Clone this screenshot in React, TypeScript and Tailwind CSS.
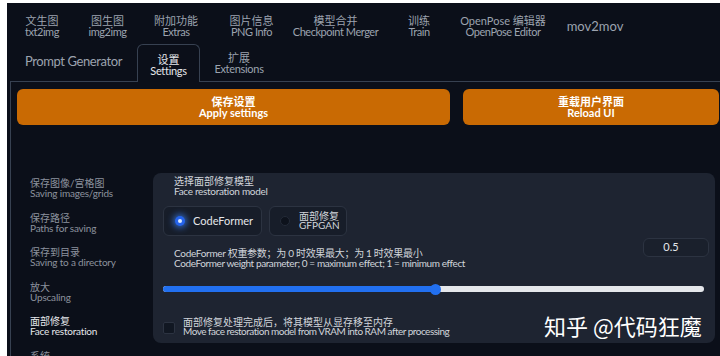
import React from "react";

const FONT = { fontFamily: 'Lato, "Noto Sans CJK SC", sans-serif' };

const row1 = [
  { zh: "文生图", en: "txt2img", w: 64 },
  { zh: "图生图", en: "img2img", w: 67 },
  { zh: "附加功能", en: "Extras", w: 70 },
  { zh: "图片信息", en: "PNG Info", w: 81 },
  { zh: "模型合并", en: "Checkpoint Merger", w: 87 },
  { zh: "训练", en: "Train", w: 80 },
  { zh: "OpenPose 编辑器", en: "OpenPose Editor", w: 88 },
];

const side = [
  { zh: "保存图像/宫格图", en: "Saving images/grids" },
  { zh: "保存路径", en: "Paths for saving" },
  { zh: "保存到目录", en: "Saving to a directory" },
  { zh: "放大", en: "Upscaling" },
  { zh: "面部修复", en: "Face restoration", active: true },
  { zh: "系统", en: "System" },
];

export default function App() {
  return (
    <div className="relative w-[720px] h-[356px] overflow-hidden bg-white pt-[3px] pl-[7px]" style={FONT}>
      <div className="h-[353px] w-[713px] bg-[#0b0f19] pl-[3px] flex flex-col overflow-hidden">
        {/* Row 1 tabs */}
        <div className="mt-[5px] h-[36px] flex items-center text-[#9ca3af] flex-none">
          {row1.map((t) => (
            <div key={t.en} className="flex-none flex flex-col items-center whitespace-nowrap text-[11px] leading-[11px]" style={{ width: t.w }}>
              <span>{t.zh}</span>
              <span className="tracking-[-0.45px]">{t.en}</span>
            </div>
          ))}
          <div className="flex-none w-[96px] text-center text-[13px] leading-[14px]">mov2mov</div>
        </div>
        {/* Row 2 tabs */}
        <div className="h-[38px] flex flex-none text-[#9ca3af]">
          <div className="w-[127px] flex-none border-b border-[#374151] flex items-center justify-center text-[13px] tracking-[-0.4px] pb-[1px]">
            Prompt Generator
          </div>
          <div className="w-[63px] flex-none border-t border-l border-r border-[#374151] rounded-t-[6px] flex flex-col items-center justify-center text-[11px] leading-[11px] text-[#e5e7eb] pt-[2px]">
            <span>设置</span>
            <span className="tracking-[-0.3px]">Settings</span>
          </div>
          <div className="flex-1 border-b border-[#374151] flex">
            <div className="w-[78px] flex flex-col items-center justify-center text-[11px] leading-[11px] pt-[1px]">
              <span>扩展</span>
              <span className="tracking-[-0.3px]">Extensions</span>
            </div>
          </div>
        </div>
        {/* Panel */}
        <div className="flex-1 border-l border-[#374151] pl-[6px] pt-[7px]">
          <div className="flex gap-[13px] h-[36px]">
            <div className="w-[433px] flex-none rounded-[6px] bg-[#c96a03] flex flex-col items-center justify-center text-white font-bold text-[11px] leading-[11px]">
              <span>保存设置</span>
              <span>Apply settings</span>
            </div>
            <div className="w-[256px] flex-none rounded-[6px] bg-[#c96a03] flex flex-col items-center justify-center text-white font-bold text-[11px] leading-[11px]">
              <span>重载用户界面</span>
              <span>Reload UI</span>
            </div>
          </div>
          <div className="mt-[48px] flex">
            <div className="w-[136px] flex-none pl-[13px] pt-[5px] flex flex-col gap-[14.5px]">
              {side.map((s) => (
                <div key={s.en} className={`flex flex-col text-[10px] leading-[10px] whitespace-nowrap ${s.active ? "text-[#e5e7eb]" : "text-[#8b929e]"}`}>
                  <span>{s.zh}</span>
                  <span className="tracking-[-0.2px]">{s.en}</span>
                </div>
              ))}
            </div>
            <div className="w-[562px] h-[170px] flex-none rounded-[8px] bg-[#1e2431] pl-[10px] pr-[6px] pt-[3px] flex flex-col">
              <div className="pl-[11px] flex flex-col text-[10px] leading-[10px] text-[#d1d5db]">
                <span>选择面部修复模型</span>
                <span className="tracking-[-0.3px]">Face restoration model</span>
              </div>
              <div className="mt-[10px] flex gap-[7px]">
                <div className="w-[99px] h-[30px] rounded-[6px] border border-[#2c3341] bg-[#171d29] flex items-center pl-[11px]">
                  <div className="w-[10px] h-[10px] rounded-full bg-[#2563eb] shadow-[0_0_6px_2px_rgba(59,130,246,0.7)] flex items-center justify-center">
                    <div className="w-[4px] h-[4px] rounded-full bg-[#dbeafe]" />
                  </div>
                  <span className="ml-[8px] text-[11px] text-[#e5e7eb]">CodeFormer</span>
                </div>
                <div className="w-[78px] h-[30px] rounded-[6px] border border-[#2c3341] bg-[#171d29] flex items-center pl-[10px]">
                  <div className="w-[10px] h-[10px] rounded-full bg-[#0d121c] border border-[#232a37]" />
                  <div className="ml-[9px] flex flex-col text-[10px] leading-[9px] text-[#d1d5db]">
                    <span>面部修复</span>
                    <span>GFPGAN</span>
                  </div>
                </div>
              </div>
              <div className="mt-[2px] flex justify-between h-[30px]">
                <div className="pl-[11px] pt-[10px] flex flex-col text-[10px] leading-[10px] text-[#d1d5db] whitespace-nowrap">
                  <span className="tracking-[-0.3px]">CodeFormer 权重参数；为 0 时效果最大；为 1 时效果最小</span>
                  <span className="tracking-[-0.4px]">CodeFormer weight parameter; 0 = maximum effect; 1 = minimum effect</span>
                </div>
                <div className="w-[66px] h-[19px] rounded-[6px] border border-[#2c3341] bg-[#1a202c] flex items-center justify-center pr-[10px] text-[11px] text-[#e5e7eb]">
                  0.5
                </div>
              </div>
              <div className="mt-[15px] mr-[5px] h-[12px] relative flex items-center">
                <div className="w-full h-[6px] rounded-full bg-[#e5e7eb] overflow-hidden">
                  <div className="h-full bg-[#2270f0]" style={{ width: "50.3%" }} />
                </div>
                <div className="absolute top-[0.5px] w-[11px] h-[11px] rounded-full bg-[#2270f0]" style={{ left: "calc(50.3% - 5.5px)" }} />
              </div>
              <div className="mt-[23px] flex">
                <div className="mt-[4px] w-[12px] h-[12px] rounded-[2px] bg-[#111722] border border-[#2c3341]" />
                <div className="ml-[8px] flex flex-col text-[10px] leading-[9px] text-[#d1d5db] whitespace-nowrap">
                  <span>面部修复处理完成后，将其模型从显存移至内存</span>
                  <span className="tracking-[-0.5px]">Move face restoration model from VRAM into RAM after processing</span>
                </div>
              </div>
            </div>
          </div>
        </div>
      </div>
      <div className="absolute left-[544px] top-[310px] text-[22px] leading-[30px] text-white whitespace-nowrap" style={{ fontFamily: '"Noto Sans CJK SC", sans-serif' }}>
        知乎 @代码狂魔
      </div>
    </div>
  );
}
